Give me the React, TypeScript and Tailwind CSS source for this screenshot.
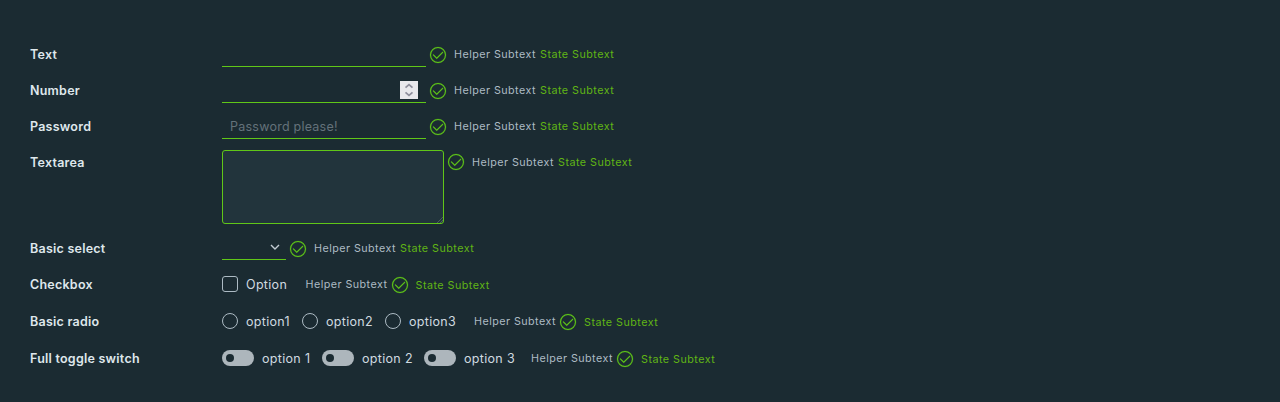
import type { ReactNode } from "react";

function StatusIcon({ className = "" }: { className?: string }) {
  return (
    <svg viewBox="0 0 36 36" className={`size-[18px] shrink-0 fill-[#60c718] stroke-[#60c718] stroke-[0.4] ${className}`}>
      <path d="M18,2A16,16,0,1,0,34,18,16,16,0,0,0,18,2Zm0,30A14,14,0,1,1,32,18,14,14,0,0,1,18,32Z" />
      <path d="M28,12.1a1,1,0,0,0-1.41,0L15.49,23.15l-6-6A1,1,0,0,0,8,18.53L15.49,26,28,13.52A1,1,0,0,0,28,12.1Z" />
    </svg>
  );
}

function Helper() {
  return <span className="w-[82px] shrink-0 pt-0.5 text-[10.75px] leading-4 tracking-[0.45px] text-[#adbbc4]">Helper Subtext</span>;
}

function State({ className = "pt-0.5" }: { className?: string }) {
  return <span className={`shrink-0 text-[10.75px] leading-4 tracking-[0.48px] text-[#60b515] ${className}`}>State Subtext</span>;
}

function FieldStatus({ iconClass = "mt-px" }: { iconClass?: string }) {
  return (
    <div className="ml-[3px] flex h-5 items-center">
      <StatusIcon className={iconClass} />
      <span className="ml-[7px] flex gap-1">
        <Helper />
        <State />
      </span>
    </div>
  );
}

function ChoiceStatus() {
  return (
    <div className="flex h-5 items-center">
      <Helper />
      <StatusIcon className="ml-[3px] mt-px" />
      <State className="ml-[7px] pt-1" />
    </div>
  );
}

function Row({ label, className = "h-9", children }: { label: string; className?: string; children: ReactNode }) {
  return (
    <div className={`flex items-start pt-2 ${className}`}>
      <div className="w-48 shrink-0 text-[12.5px] leading-[21px] font-semibold tracking-[0.24px] text-[#dfe7ec]">{label}</div>
      {children}
    </div>
  );
}

function Option({ text, className, children }: { text: string; className: string; children: ReactNode }) {
  return (
    <label className={`flex h-5 shrink-0 items-center gap-2 text-[12.5px] tracking-[0.32px] text-[#d0dae0] ${className}`}>
      {children}
      <span className="mt-0.5 leading-4">{text}</span>
    </label>
  );
}

function Toggle() {
  return (
    <span className="flex h-4 w-8 shrink-0 items-center rounded-full bg-[#adb6bc] pl-1">
      <span className="size-2 rounded-full bg-[#1b2b32]" />
    </span>
  );
}

const radio = "size-4 shrink-0 rounded-full border border-[#adbbc4]";

export default function App() {
  return (
    <main className="h-[402px] w-[1280px] overflow-hidden bg-[#1b2b32] pt-9 pl-[30px] font-['Inter',sans-serif] whitespace-nowrap">
      <Row label="Text">
        <input className="h-[23px] w-[204px] border-b border-[#60c718] bg-transparent px-2 outline-none" />
        <FieldStatus />
      </Row>
      <Row label="Number">
        <div className="flex h-[23px] w-[204px] justify-end border-b border-[#60c718] pr-2">
          <span className="mt-px flex h-[18px] w-[18px] items-center justify-center bg-[#e9e9ed]">
            <svg viewBox="0 0 18 18" className="size-[18px] fill-none stroke-[#8f8f9d] stroke-[1.7]">
              <path d="M5.5 6.7 9 3.6 12.5 6.7M5.5 11.3 9 14.4 12.5 11.3" />
            </svg>
          </span>
        </div>
        <FieldStatus />
      </Row>
      <Row label="Password">
        <input
          className="h-[23px] w-[204px] border-b border-[#60c718] bg-transparent px-2 pb-px text-[12.5px] tracking-[0.24px] outline-none placeholder:text-[#64727a]"
          type="password"
          placeholder="Password please!"
        />
        <FieldStatus />
      </Row>
      <Row label="Textarea" className="h-[86px]">
        <div className="-mt-0.5 flex h-[74px] w-[222px] items-end justify-end rounded-[3px] border border-[#60c718] bg-[#22343c]">
          <svg viewBox="0 0 6 6" className="size-1.5 stroke-[#56636a] stroke-[0.8]">
            <path d="M0 6 6 0M3 6 6 3" />
          </svg>
        </div>
        <FieldStatus iconClass="-mt-px" />
      </Row>
      <Row label="Basic select">
        <div className="flex h-[22px] w-16 items-center justify-end border-b border-[#60c718] pr-1.5">
          <svg viewBox="0 0 10 6" className="mb-[3px] h-1.5 w-2.5 fill-none stroke-[#c3cdd4] stroke-[1.4]">
            <path d="M1 1 5 5 9 1" />
          </svg>
        </div>
        <FieldStatus />
      </Row>
      <Row label="Checkbox">
        <Option text="Option" className="w-[83.5px]">
          <span className="size-4 shrink-0 rounded-[3px] border border-[#adbbc4]" />
        </Option>
        <ChoiceStatus />
      </Row>
      <Row label="Basic radio" className="mt-px h-[37px]">
        <Option text="option1" className="w-20"><span className={radio} /></Option>
        <Option text="option2" className="w-[83px]"><span className={radio} /></Option>
        <Option text="option3" className="w-[89px]"><span className={radio} /></Option>
        <ChoiceStatus />
      </Row>
      <Row label="Full toggle switch">
        <Option text="option 1" className="w-[100px]"><Toggle /></Option>
        <Option text="option 2" className="w-[102px]"><Toggle /></Option>
        <Option text="option 3" className="w-[107px]"><Toggle /></Option>
        <ChoiceStatus />
      </Row>
    </main>
  );
}
